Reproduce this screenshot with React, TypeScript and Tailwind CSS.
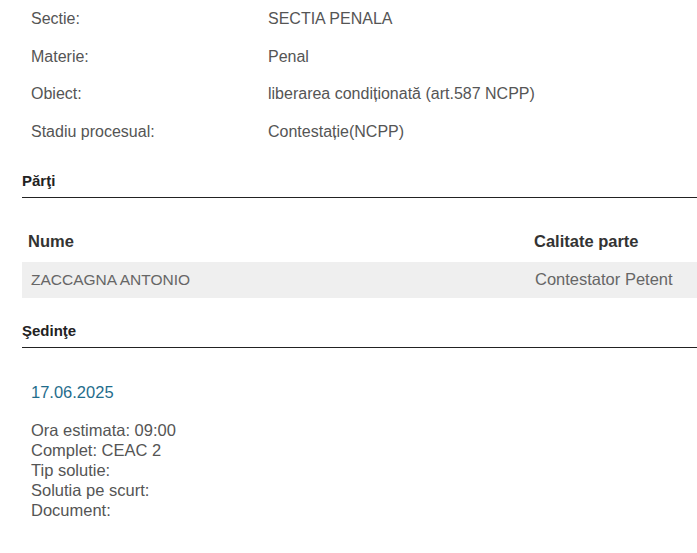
import React from "react";

const rows: [string, string][] = [
  ["Sectie:", "SECTIA PENALA"],
  ["Materie:", "Penal"],
  ["Obiect:", "liberarea condiționată (art.587 NCPP)"],
  ["Stadiu procesual:", "Contestație(NCPP)"],
];

export default function App() {
  return (
    <div className="w-[697px] h-[553px] bg-white overflow-hidden text-[#555] font-['Liberation_Sans',Arial,sans-serif]">
      <div className="flex flex-col pl-[31px] pt-[8px]">
        {rows.map(([k, v]) => (
          <div key={k} className="flex h-[37.7px] items-start text-[16px] leading-[22px]">
            <div className="w-[237px]">{k}</div>
            <div>{v}</div>
          </div>
        ))}
      </div>
      <div className="ml-[22px] mt-[13px]">
        <div className="text-[15px] font-bold text-[#222] leading-[18px] pb-[7px] border-b border-[#222]">Părţi</div>
        <div className="mt-[33px] flex text-[16.5px] font-bold text-[#333] leading-[20px] pl-[6px]">
          <div className="w-[506px]">Nume</div>
          <div>Calitate parte</div>
        </div>
        <div className="mt-[11px] h-[36px] bg-[#efefef] flex items-center text-[#666] pl-[9px]">
          <div className="w-[504px] text-[15.5px]">ZACCAGNA ANTONIO</div>
          <div className="text-[16.5px]">Contestator Petent</div>
        </div>
        <div className="mt-[24px] text-[15px] font-bold text-[#222] leading-[18px] pb-[7px] border-b border-[#222]">Şedinţe</div>
        <div className="pl-[9px] mt-[34px] text-[16.5px] text-[#1f6d8c] leading-[20px]">17.06.2025</div>
        <div className="pl-[9px] mt-[18px] text-[16.5px] text-[#555] leading-[20px] flex flex-col">
          <div>Ora estimata: 09:00</div>
          <div>Complet: CEAC 2</div>
          <div>Tip solutie:</div>
          <div>Solutia pe scurt:</div>
          <div>Document:</div>
        </div>
      </div>
    </div>
  );
}
